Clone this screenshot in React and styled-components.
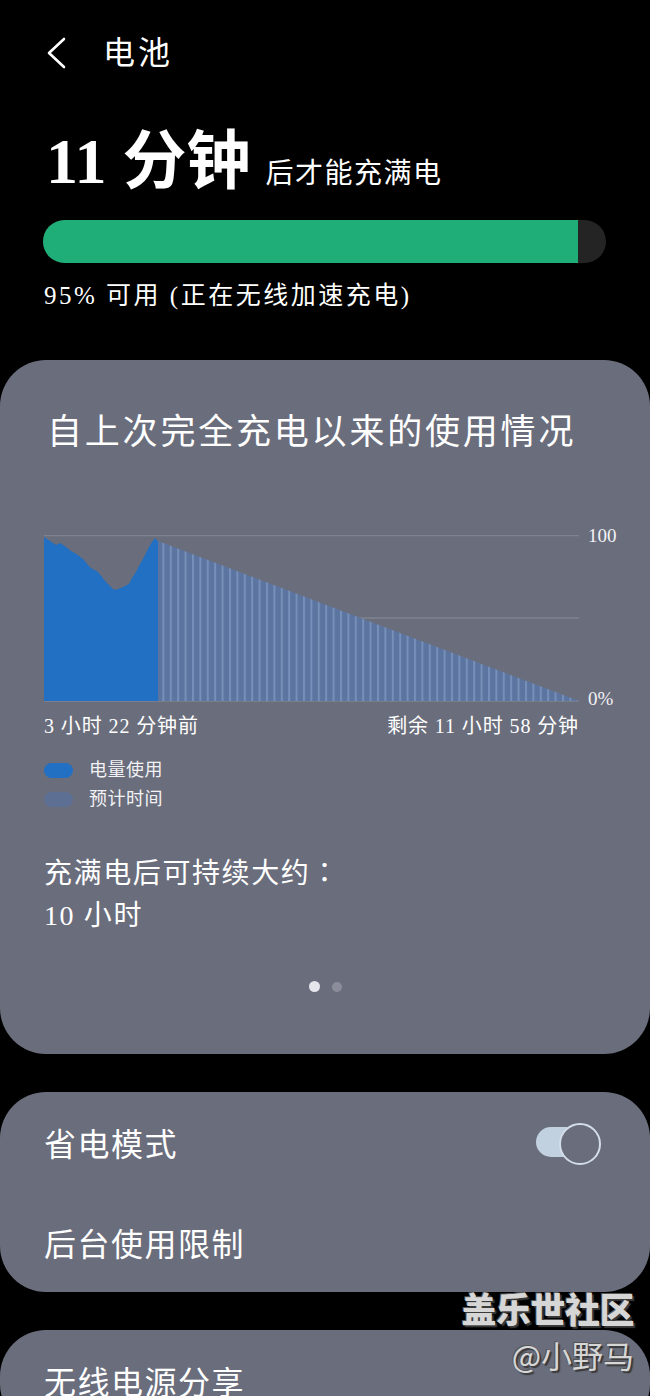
import React from "react";
import styled, { createGlobalStyle } from "styled-components";

const GlobalStyle = createGlobalStyle`
  html, body {
    margin: 0;
    padding: 0;
    background: #000;
  }
  * {
    box-sizing: border-box;
  }
`;

const FONT = `"Liberation Serif", "Noto Sans CJK SC", serif`;

const Page = styled.div`
  position: relative;
  width: 650px;
  height: 1396px;
  overflow: hidden;
  background: #000;
  color: #fff;
  font-family: ${FONT};
`;

const Header = styled.div`
  display: flex;
  align-items: center;
  height: 40px;
  margin-top: 33px;
  padding-left: 46px;
  gap: 35px;
`;

const HeaderTitle = styled.div`
  font-size: 32px;
  letter-spacing: 3px;
  line-height: 1;
`;

const Hero = styled.div`
  display: flex;
  align-items: baseline;
  margin-top: 57px;
  padding-left: 46px;
  line-height: 1;
`;

const BigTime = styled.span`
  font-size: 64px;
  font-weight: 700;
  margin-right: 15px;
`;

const HeroRest = styled.span`
  font-size: 28px;
  letter-spacing: 1.5px;
`;

const Bar = styled.div`
  height: 43px;
  margin: 26px 44px 0 43px;
  border-radius: 22px;
  background: #242424;
  overflow: hidden;
`;

const BarFill = styled.div`
  height: 100%;
  background: #1fae78;
`;

const Caption = styled.div`
  margin-top: 18px;
  padding-left: 44px;
  font-size: 25px;
  line-height: 1.2;
  letter-spacing: 2.5px;
`;

const Card = styled.div`
  background: #6a6d7c;
  border-radius: 46px;
  margin-top: ${(p) => p.$gap}px;
  padding: ${(p) => p.$pad};
`;

const CardTitle = styled.div`
  font-size: 35px;
  letter-spacing: 2.8px;
  line-height: 1.2;
  padding-left: 3px;
  white-space: nowrap;
`;

const ChartRow = styled.div`
  display: flex;
  align-items: stretch;
  margin-top: 81px;
  svg {
    flex-shrink: 0;
  }
`;

const AxisLabels = styled.div`
  display: flex;
  flex-direction: column;
  justify-content: space-between;
  flex-shrink: 0;
  margin-left: 9px;
  height: 166px;
  font-size: 19px;
  color: #f2f2f4;
  line-height: 1;
  transform: translateY(-9px);
  span:last-child {
    transform: translateY(16px);
  }
`;

const TimeRow = styled.div`
  display: flex;
  justify-content: space-between;
  width: 535px;
  margin-top: 11px;
  font-size: 20px;
  line-height: 1.2;
  letter-spacing: 0.9px;
`;

const Legend = styled.div`
  display: flex;
  flex-direction: column;
  gap: 7px;
  margin-top: 21px;
`;

const LegendItem = styled.div`
  display: flex;
  align-items: center;
  gap: 16px;
  font-size: 18px;
  line-height: 22px;
  letter-spacing: 0.5px;
  color: #f2f2f4;
`;

const Swatch = styled.span`
  width: 29px;
  height: 15px;
  border-radius: 8px;
  background: ${(p) => p.$color};
`;

const Duration = styled.div`
  margin-top: 40px;
  font-size: 28px;
  line-height: 42px;
  letter-spacing: 1.6px;
`;

const Colon = styled.span`
  font-family: "Noto Sans CJK TC", sans-serif;
`;

const Dots = styled.div`
  display: flex;
  justify-content: center;
  align-items: center;
  gap: 12px;
  margin-top: 44px;
`;

const Dot = styled.span`
  width: ${(p) => (p.$active ? 11 : 10)}px;
  height: ${(p) => (p.$active ? 11 : 10)}px;
  border-radius: 50%;
  background: ${(p) => (p.$active ? "#e4e6ec" : "#8b8e9a")};
`;

const Row = styled.div`
  display: flex;
  align-items: center;
  justify-content: space-between;
  height: ${(p) => p.$h}px;
  font-size: 32px;
  letter-spacing: 1.5px;
`;

const Toggle = styled.span`
  position: relative;
  display: inline-block;
  width: 65px;
  height: 38px;
  margin-right: 5px;
  &::before {
    content: "";
    position: absolute;
    left: 0;
    top: 4px;
    width: 52px;
    height: 30px;
    border-radius: 15px;
    background: #c2d1df;
  }
  &::after {
    content: "";
    position: absolute;
    right: 0;
    top: 0;
    width: 38px;
    height: 38px;
    border-radius: 50%;
    border: 2px solid #d3dde8;
    background: #6a6d7c;
  }
`;

const Watermark = styled.div`
  position: absolute;
  right: 16px;
  top: 1290px;
  display: flex;
  flex-direction: column;
  align-items: flex-end;
  font-family: "Noto Sans CJK SC", sans-serif;
  color: #d6d6d6;
  text-shadow: 2px 2px 1px #3a3a3a, -1px -1px 0 #555;
  line-height: 1;
`;

const MarkTitle = styled.span`
  font-size: 35px;
  font-weight: 900;
  letter-spacing: -0.5px;
`;

const MarkUser = styled.span`
  margin-top: 14px;
  font-size: 31px;
  font-weight: 400;
`;

function BackIcon() {
  return (
    <svg width="22" height="34" viewBox="0 0 22 34">
      <polyline
        points="18,3 3,17 18,31"
        fill="none"
        stroke="#fff"
        strokeWidth="2.6"
        strokeLinecap="round"
        strokeLinejoin="round"
      />
    </svg>
  );
}

const usage = [
  [0, 2], [6, 6], [12, 10], [16, 8], [22, 12], [27, 16], [34, 20], [40, 25],
  [44, 30], [47, 33], [54, 37], [58, 42], [62, 47], [66, 51], [70, 55],
  [74, 54], [77, 53], [81, 51], [85, 49], [88, 43], [92, 37], [96, 29],
  [99, 24], [102, 18], [105, 12], [108, 7], [111, 3], [114, 6],
];

function UsageChart() {
  const w = 535;
  const h = 166;
  const area =
    "M0," + h + " " + usage.map(([x, y]) => `L${x},${y}`).join(" ") + ` L114,${h} Z`;
  return (
    <svg width={w} height={h + 2} viewBox={`0 0 ${w} ${h + 2}`}>
      <defs>
        <pattern id="stripes" width="7.4" height="10" patternUnits="userSpaceOnUse">
          <rect width="7.4" height="10" fill="#5c75a0" />
          <rect x="0" width="2" height="10" fill="#7690b9" />
        </pattern>
      </defs>
      <line x1="0" y1="0.5" x2={w} y2="0.5" stroke="#80838f" strokeWidth="1.5" />
      <line x1="0" y1="83" x2={w} y2="83" stroke="#80838f" strokeWidth="1.5" />
      <polygon points={`114,6 ${w},${h} 114,${h}`} fill="url(#stripes)" />
      <path d={area} fill="#2170c3" />
      <line x1="0" y1={h + 0.5} x2={w} y2={h + 0.5} stroke="#7a7e8b" strokeWidth="1" />
    </svg>
  );
}

export default function App() {
  return (
    <Page>
      <GlobalStyle />
      <Header>
        <BackIcon />
        <HeaderTitle>电池</HeaderTitle>
      </Header>

      <Hero>
        <BigTime>11 分钟</BigTime>
        <HeroRest>后才能充满电</HeroRest>
      </Hero>

      <Bar>
        <BarFill style={{ width: "95%" }} />
      </Bar>

      <Caption>95% 可用 (正在无线加速充电)</Caption>

      <Card $gap={49} $pad="52px 44px 0 44px" style={{ height: 694 }}>
        <CardTitle>自上次完全充电以来的使用情况</CardTitle>
        <ChartRow>
          <UsageChart />
          <AxisLabels>
            <span>100</span>
            <span>0%</span>
          </AxisLabels>
        </ChartRow>
        <TimeRow>
          <span>3 小时 22 分钟前</span>
          <span>剩余 11 小时 58 分钟</span>
        </TimeRow>
        <Legend>
          <LegendItem>
            <Swatch $color="#2170c3" />
            电量使用
          </LegendItem>
          <LegendItem>
            <Swatch $color="#5d6f92" />
            预计时间
          </LegendItem>
        </Legend>
        <Duration>
          充满电后可持续大约<Colon>：</Colon>
          <br />
          10 小时
        </Duration>
        <Dots>
          <Dot $active />
          <Dot />
        </Dots>
      </Card>

      <Card $gap={38} $pad="0 44px 0 44px">
        <Row $h={100}>
          省电模式
          <Toggle />
        </Row>
        <Row $h={100}>后台使用限制</Row>
      </Card>

      <Card $gap={38} $pad="0 44px 0 44px">
        <Row $h={100}>无线电源分享</Row>
      </Card>

      <Watermark>
        <MarkTitle>盖乐世社区</MarkTitle>
        <MarkUser>@小野马</MarkUser>
      </Watermark>
    </Page>
  );
}
